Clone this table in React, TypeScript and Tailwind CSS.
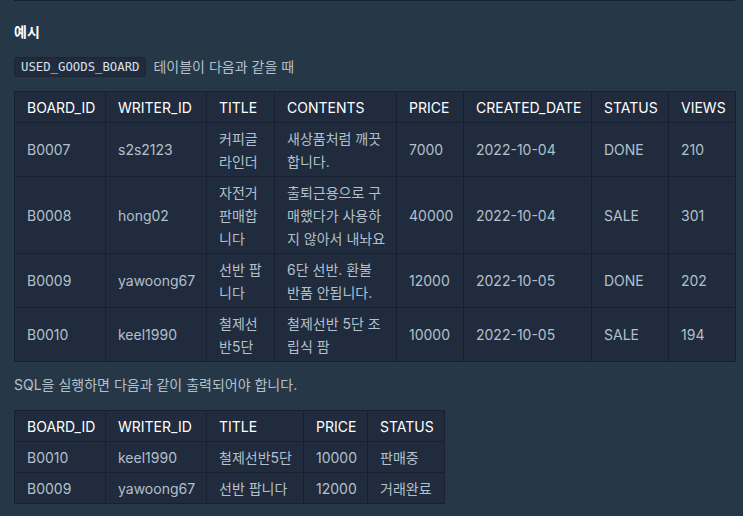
import React from "react";

const font = { fontFamily: 'Inter, "Noto Sans CJK KR", sans-serif' };

const boardCols = ["BOARD_ID", "WRITER_ID", "TITLE", "CONTENTS", "PRICE", "CREATED_DATE", "STATUS", "VIEWS"];
const boardWidths = ["w-[91px]", "w-[101px]", "w-[68px]", "w-[122px]", "w-[67px]", "w-[128px]", "w-[77px]", "w-[67px]"];
const boardRows = [
  ["B0007", "s2s2123", "커피글라인더", "새상품처럼 깨끗합니다.", "7000", "2022-10-04", "DONE", "210"],
  ["B0008", "hong02", "자전거판매합니다", "출퇴근용으로 구매했다가 사용하지 않아서 내놔요", "40000", "2022-10-04", "SALE", "301"],
  ["B0009", "yawoong67", "선반 팝니다", "6단 선반. 환불 반품 안됩니다.", "12000", "2022-10-05", "DONE", "202"],
  ["B0010", "keel1990", "철제선반5단", "철제선반 5단 조립식 팜", "10000", "2022-10-05", "SALE", "194"],
];

const resultCols = ["BOARD_ID", "WRITER_ID", "TITLE", "PRICE", "STATUS"];
const resultWidths = ["w-[91px]", "w-[101px]", "w-[97px]", "w-[64px]", "w-[77px]"];
const resultRows = [
  ["B0010", "keel1990", "철제선반5단", "10000", "판매중"],
  ["B0009", "yawoong67", "선반 팝니다", "12000", "거래완료"],
];

function DataTable({ cols, widths, rows, total }: { cols: string[]; widths: string[]; rows: string[][]; total: string }) {
  return (
    <table className={`table-fixed border-collapse bg-[#202b3d] text-[14px] ${total}`}>
      <colgroup>
        {widths.map((w, i) => (
          <col key={i} className={w} />
        ))}
      </colgroup>
      <thead>
        <tr>
          {cols.map((c) => (
            <th key={c} className="border border-[#172030] py-[3.5px] pl-3 pr-[7.5px] text-left font-normal leading-[23px] text-white">
              {c}
            </th>
          ))}
        </tr>
      </thead>
      <tbody>
        {rows.map((r) => (
          <tr key={r[0]}>
            {r.map((v, i) => (
              <td key={i} className="border border-[#172030] py-[3.5px] pl-3 pr-[7.5px] align-middle leading-[23px] text-[#b2c0cc]">
                {v}
              </td>
            ))}
          </tr>
        ))}
      </tbody>
    </table>
  );
}

export default function App() {
  return (
    <div className="min-h-screen bg-[#263747] pl-[14px] pr-2" style={font}>
      <div className="border-t border-[#172030]" />

      <p className="mt-[21px] text-[14px] font-bold leading-5 text-white">예시</p>

      <p className="mt-[15px] flex items-center gap-[7px] text-[14px] leading-5 text-[#b2c0cc]">
        <code
          className="rounded-[3px] border border-[#1b2535] bg-[#202b3d] px-[6px] text-[12.3px] leading-[18px] text-[#d7e0e8]"
          style={{ fontFamily: '"DejaVu Sans Mono", "Liberation Mono", monospace' }}
        >
          USED_GOODS_BOARD
        </code>
        <span>테이블이 다음과 같을 때</span>
      </p>

      <div className="mt-[14px]">
        <DataTable cols={boardCols} widths={boardWidths} rows={boardRows} total="w-[721px]" />
      </div>

      <p className="mt-[13px] text-[14px] leading-5 text-[#b2c0cc]">SQL을 실행하면 다음과 같이 출력되어야 합니다.</p>

      <div className="mt-[15px] pb-4">
        <DataTable cols={resultCols} widths={resultWidths} rows={resultRows} total="w-[430px]" />
      </div>
    </div>
  );
}
